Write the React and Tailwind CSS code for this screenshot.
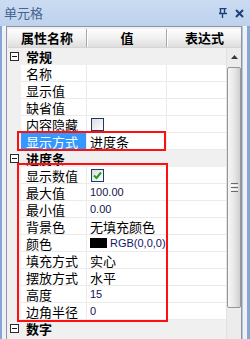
import React from "react";

const CJK = { fontFamily: '"Noto Sans CJK SC", "Noto Sans", sans-serif' };
const LAT = { fontFamily: '"Liberation Sans", Arial, sans-serif' };

const rows = [
  { cat: true, label: "常规" },
  { label: "名称" },
  { label: "显示值" },
  { label: "缺省值" },
  { label: "内容隐藏", checkbox: true, checked: false },
  { label: "显示方式", value: "进度条", selected: true },
  { cat: true, label: "进度条" },
  { label: "显示数值", checkbox: true, checked: true },
  { label: "最大值", value: "100.00", latin: true },
  { label: "最小值", value: "0.00", latin: true },
  { label: "背景色", value: "无填充颜色" },
  { label: "颜色", color: true },
  { label: "填充方式", value: "实心" },
  { label: "摆放方式", value: "水平" },
  { label: "高度", value: "15", latin: true },
  { label: "边角半径", value: "0", latin: true },
  { cat: true, label: "数字" },
];

function Minus() {
  return (
    <div className="w-[9px] h-[9px] border border-[#2b2b2b] bg-white flex items-center justify-center">
      <div className="w-[5px] h-[1px] bg-[#1a1a1a]" />
    </div>
  );
}

function Checkbox({ checked }) {
  return (
    <div className="w-[13px] h-[13px] border border-[#1d3b66] bg-gradient-to-br from-[#dcdcdc] to-[#ffffff] flex items-center justify-center">
      {checked && (
        <svg width="9" height="9" viewBox="0 0 9 9">
          <path d="M1 4.5 L3.5 7 L8 1.5" stroke="#1fa01f" strokeWidth="2" fill="none" />
        </svg>
      )}
    </div>
  );
}

function Row({ r }) {
  if (r.cat) {
    return (
      <div className="h-[17px] flex items-center bg-[#f0f0f0]">
        <div className="w-[14px] pl-[3px] flex items-center">
          <Minus />
        </div>
        <div className="pl-[5px] text-[13px] font-bold text-black leading-[15px]" style={CJK}>
          {r.label}
        </div>
      </div>
    );
  }
  return (
    <div className="h-[17px] flex">
      <div className="w-[14px] h-full bg-[#f0f0f0]" />
      <div className="w-[66px] h-full border-r border-b border-[#ebebeb] bg-white">
        <div
          className={
            "h-[16px] pl-[5px] flex items-center text-[13px] leading-[15px] " +
            (r.selected ? "bg-[#3399ff] text-white" : "text-black")
          }
          style={CJK}
        >
          {r.label}
        </div>
      </div>
      <div className="w-[80px] h-full border-r border-b border-[#ebebeb] bg-white pl-[3px] flex items-center">
        {r.checkbox && (
          <div className="pl-[1px]">
            <Checkbox checked={r.checked} />
          </div>
        )}
        {r.color && (
          <div className="flex items-center">
            <div className="w-[17px] h-[10px] bg-black" />
            <span className="pl-[3px] text-[11px] text-[#14146a] leading-[13px]" style={LAT}>
              RGB(0,0,0)
            </span>
          </div>
        )}
        {r.value && (
          <span
            className={
              r.latin ? "text-[11px] leading-[13px] text-[#14144e]" : "text-[13px] leading-[15px] text-black"
            }
            style={r.latin ? LAT : CJK}
          >
            {r.value}
          </span>
        )}
      </div>
      <div className="flex-1 h-full border-b border-[#ebebeb] bg-white" />
    </div>
  );
}

export default function App() {
  return (
    <div className="w-[250px] h-[339px] overflow-hidden flex flex-col bg-[#c3d6ef]" style={CJK}>
      <div className="h-[26px] flex items-center justify-between pl-[4px] pr-[6px] bg-gradient-to-b from-[#cbdcf2] to-[#bed2ed]">
        <span className="text-[13px] text-[#46648f] leading-[16px]">单元格</span>
        <div className="flex items-center gap-[8px]">
          <svg width="8" height="10" viewBox="0 0 8 10">
            <path d="M0.5 0.5 H7.5 M1.5 0.5 V5.5 M5.5 0.5 V5.5 M0 5.5 H8 M3.5 5.5 V10" stroke="#1e3f7a" strokeWidth="1.4" fill="none" />
          </svg>
          <svg width="9" height="9" viewBox="0 0 9 9">
            <path d="M1 1 L8 8 M8 1 L1 8" stroke="#1e3f7a" strokeWidth="2" fill="none" />
          </svg>
        </div>
      </div>
      <div className="flex-1 flex min-h-0">
        <div className="w-[2px] bg-[#86a7d6]" />
        <div className="w-[4px] bg-[#eef1f6]" />
        <div className="w-[236px] border-l border-t border-r border-[#8d96a3] bg-[#f0f0f0] flex flex-col min-h-0">
          <div className="h-[2px]" />
          <div className="h-[19px] ml-[1px] flex bg-gradient-to-b from-[#fdfdfd] via-[#f1f1f1] to-[#dedede] border-b border-[#d5d5d5]">
            <div className="w-[79px] flex items-center justify-center border-r border-[#a8a8a8] text-[13px] font-bold text-black leading-[16px]">
              属性名称
            </div>
            <div className="w-[80px] flex items-center justify-center border-r border-[#a8a8a8] border-l border-l-white text-[13px] font-bold text-black leading-[16px]">
              值
            </div>
            <div className="flex-1 flex items-center justify-center border-l border-l-white text-[13px] font-bold text-black leading-[16px]">
              表达式
            </div>
          </div>
          <div className="flex-1 flex min-h-0">
            <div className="w-[219px] relative flex flex-col bg-white">
              {rows.map((r, i) => (
                <Row key={i} r={r} />
              ))}
              <div className="flex-1 bg-[#f0f0f0]" />
              <div className="absolute left-[10px] top-[83px] w-[149px] h-[20px] border-2 border-[#ff1010]" />
              <div className="absolute left-[10px] top-[115px] w-[151px] h-[159px] border-2 border-[#ff1010]" />
            </div>
            <div className="w-[15px] flex flex-col bg-[#ececec] border-l border-[#e2e2e2]">
              <div className="h-[17px] flex items-center justify-center">
                <svg width="7" height="4" viewBox="0 0 7 4">
                  <path d="M0 4 L3.5 0 L7 4 Z" fill="#3a3a3a" />
                </svg>
              </div>
              <div className="mt-[2px] h-[241px] rounded-[2px] border border-[#979797] bg-gradient-to-r from-[#f6f6f6] via-[#e8e8e8] to-[#cfcfcf] flex flex-col items-center justify-center gap-[1px]">
                <div className="w-[7px] h-[1px] bg-[#6b6b6b]" />
                <div className="w-[7px] h-[1px] bg-[#ffffff]" />
                <div className="w-[7px] h-[1px] bg-[#6b6b6b]" />
                <div className="w-[7px] h-[1px] bg-[#ffffff]" />
                <div className="w-[7px] h-[1px] bg-[#6b6b6b]" />
              </div>
            </div>
          </div>
        </div>
        <div className="w-[5px] bg-[#eef1f6] border-l border-[#b9c4d3]" />
        <div className="w-[3px] bg-[#86a7d6]" />
      </div>
    </div>
  );
}
